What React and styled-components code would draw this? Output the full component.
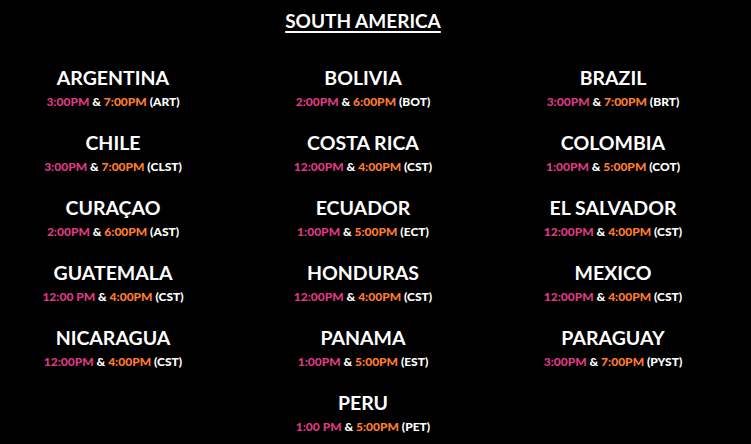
import React from 'react';
import styled, { createGlobalStyle } from 'styled-components';

const Global = createGlobalStyle`
body {
  margin:0;
  background:#000;
  font-family:"Lato","Open Sans",sans-serif;
}
`;
const Page = styled.div`
width:726px;
height:444px;
background:#000;
color:#fff;
display:flex;
flex-direction:column;
align-items:center;
overflow:hidden;
`;
const Title = styled.h2`
margin:10px 0 0 0;
font-size:19px;
font-weight:700;
text-decoration:underline;
text-underline-offset:3px;
text-decoration-thickness:2px;
line-height:22px;
`;
const Grid = styled.div`
width:100%;
display:grid;
grid-template-columns:repeat(3, 250px);
justify-content:center;
row-gap:19px;
margin-top:35px;
`;
const Cell = styled.div`
display:flex;
flex-direction:column;
align-items:center;
grid-column:${p => p.center ? '2' : 'auto'};
`;
const Name = styled.div`
font-size:19.5px;
font-weight:700;
line-height:22px;
`;
const Times = styled.div`
margin-top:2px;
font-size:12px;
font-weight:900;
line-height:22px;
`;
const Pink = styled.span`
color:#dc3a82;
`;
const Orange = styled.span`
color:#ff7b2e;
`;

const countries = [
  ['ARGENTINA', '3:00PM', '7:00PM', 'ART'],
  ['BOLIVIA', '2:00PM', '6:00PM', 'BOT'],
  ['BRAZIL', '3:00PM', '7:00PM', 'BRT'],
  ['CHILE', '3:00PM', '7:00PM', 'CLST'],
  ['COSTA RICA', '12:00PM', '4:00PM', 'CST'],
  ['COLOMBIA', '1:00PM', '5:00PM', 'COT'],
  ['CURAÇAO', '2:00PM', '6:00PM', 'AST'],
  ['ECUADOR', '1:00PM', '5:00PM', 'ECT'],
  ['EL SALVADOR', '12:00PM', '4:00PM', 'CST'],
  ['GUATEMALA', '12:00 PM', '4:00PM', 'CST'],
  ['HONDURAS', '12:00PM', '4:00PM', 'CST'],
  ['MEXICO', '12:00PM', '4:00PM', 'CST'],
  ['NICARAGUA', '12:00PM', '4:00PM', 'CST'],
  ['PANAMA', '1:00PM', '5:00PM', 'EST'],
  ['PARAGUAY', '3:00PM', '7:00PM', 'PYST'],
  ['PERU', '1:00 PM', '5:00PM', 'PET'],
];

export default function App() {
  return (
    <Page>
      <Global />
      <Title>SOUTH AMERICA</Title>
      <Grid>
        {countries.map(([name, a, b, tz], i) => (
          <Cell key={name} center={i === countries.length - 1}>
            <Name>{name}</Name>
            <Times>
              <Pink>{a}</Pink> &amp; <Orange>{b}</Orange> ({tz})
            </Times>
          </Cell>
        ))}
      </Grid>
    </Page>
  );
}
